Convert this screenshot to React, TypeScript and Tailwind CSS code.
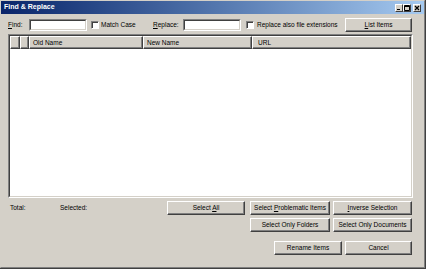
import React from "react";

const font = "font-['Liberation_Sans',Arial,sans-serif]";

function Btn({ w, children }: { w: string; children: React.ReactNode }) {
    return (
        <div
            className={`${w} flex h-[14px] items-center justify-center border border-t-white border-l-white border-r-[#404040] border-b-[#404040] bg-[#d4d0c8] text-[6.5px] text-black shadow-[inset_-1px_-1px_0_#808080]`}
        >
            {children}
        </div>
    );
}

function TextBox() {
    return (
        <div className="h-[12px] w-[58px] border border-t-[#808080] border-l-[#808080] border-r-white border-b-white">
            <div className="h-full w-full border border-t-[#404040] border-l-[#404040] border-r-[#d4d0c8] border-b-[#d4d0c8] bg-white" />
        </div>
    );
}

function CheckBox() {
    return (
        <div className="h-[8px] w-[8px] border border-t-[#808080] border-l-[#808080] border-r-white border-b-white bg-white shadow-[inset_1px_1px_0_#404040]" />
    );
}

function HeaderCell({ w, label, pad = "pl-[3px]" }: { w: string; label?: string; pad?: string }) {
    return (
        <div
            className={`${w} ${pad} flex h-[13px] shrink-0 items-center border border-t-white border-l-white border-r-[#404040] border-b-[#404040] bg-[#d4d0c8] text-[6.5px] shadow-[inset_-1px_-1px_0_#808080]`}
        >
            {label}
        </div>
    );
}

function WinButton({ kind }: { kind: "min" | "max" | "close" }) {
    return (
        <div className="flex h-[8px] w-[8px] items-center justify-center border border-t-white border-l-white border-r-[#404040] border-b-[#404040] bg-[#d4d0c8]">
            <svg width="6" height="6" viewBox="0 0 6 6">
                {kind === "min" && <rect x="1" y="4" width="3" height="1" fill="#000" />}
                {kind === "max" && (
                    <path d="M0.5 0.5h5v5h-5z M0.5 1.5h5" stroke="#000" strokeWidth="1" fill="none" />
                )}
                {kind === "close" && (
                    <path d="M1 1L5 5M5 1L1 5" stroke="#000" strokeWidth="1.2" fill="none" />
                )}
            </svg>
        </div>
    );
}

export default function App() {
    return (
        <div className={`${font} h-[269px] w-[426px] border-r border-b border-[#404040] bg-[#d4d0c8] text-black`}>
            <div className="flex h-full w-full flex-col border-t border-l border-r border-b border-t-[#d4d0c8] border-l-[#d4d0c8] border-r-[#808080] border-b-[#808080]">
                {/* title bar */}
                <div className="flex h-[13px] items-center bg-gradient-to-r from-[#0a246a] to-[#a6caf0] pr-[3px] pl-[3px]">
                    <span className="text-[7px] font-bold text-white">Find &amp; Replace</span>
                    <div className="ml-auto flex items-center">
                        <WinButton kind="min" />
                        <WinButton kind="max" />
                        <div className="ml-[2px]">
                            <WinButton kind="close" />
                        </div>
                    </div>
                </div>

                {/* find / replace row */}
                <div className="mt-[4px] ml-[7px] flex h-[14px] w-[404px] items-center text-[6.5px]">
                    <span className="w-[21px]">
                        <span className="underline">F</span>ind:
                    </span>
                    <TextBox />
                    <div className="ml-[4px]">
                        <CheckBox />
                    </div>
                    <span className="ml-[2px] w-[52px]">Match Case</span>
                    <span className="w-[30px]">
                        <span className="underline">R</span>eplace:
                    </span>
                    <TextBox />
                    <div className="ml-[5px]">
                        <CheckBox />
                    </div>
                    <span className="ml-[3px]">Replace also file extensions</span>
                    <div className="ml-auto">
                        <Btn w="w-[67px]">
                            <span>
                                <span className="underline">L</span>ist Items
                            </span>
                        </Btn>
                    </div>
                </div>

                {/* list view */}
                <div className="mt-[2px] ml-[7px] h-[164px] w-[405px] border border-t-[#808080] border-l-[#808080] border-r-white border-b-white">
                    <div className="flex h-full w-full flex-col border border-t-[#404040] border-l-[#404040] border-r-[#d4d0c8] border-b-[#d4d0c8] bg-white">
                        <div className="flex">
                            <HeaderCell w="w-[10px]" />
                            <HeaderCell w="w-[9px]" />
                            <HeaderCell w="w-[114px]" label="Old Name" />
                            <HeaderCell w="w-[109px]" label="New Name" />
                            <HeaderCell w="flex-1" label="URL" pad="pl-[5px]" />
                        </div>
                    </div>
                </div>

                {/* bottom controls */}
                <div className="mt-[3px] ml-[7px] flex w-[404px] flex-col gap-[3px] text-[6.5px]">
                    <div className="flex items-center">
                        <span className="w-[52px] pl-[2px]">Total:</span>
                        <span>Selected:</span>
                        <div className="ml-auto flex gap-[5px]">
                            <Btn w="w-[78px]">
                                <span>
                                    Select <span className="underline">A</span>ll
                                </span>
                            </Btn>
                            <div className="flex gap-[3px]">
                                <Btn w="w-[80px]">
                                    <span>
                                        Select <span className="underline">P</span>roblematic Items
                                    </span>
                                </Btn>
                                <Btn w="w-[79px]">
                                    <span>
                                        <span className="underline">I</span>nverse Selection
                                    </span>
                                </Btn>
                            </div>
                        </div>
                    </div>
                    <div className="flex justify-end gap-[3px]">
                        <Btn w="w-[80px]">Select Only Folders</Btn>
                        <Btn w="w-[79px]">Select Only Documents</Btn>
                    </div>
                    <div className="mt-[6px] flex justify-end gap-[3px]">
                        <Btn w="w-[68px]">Rename Items</Btn>
                        <Btn w="w-[67px]">Cancel</Btn>
                    </div>
                </div>
            </div>
        </div>
    );
}
